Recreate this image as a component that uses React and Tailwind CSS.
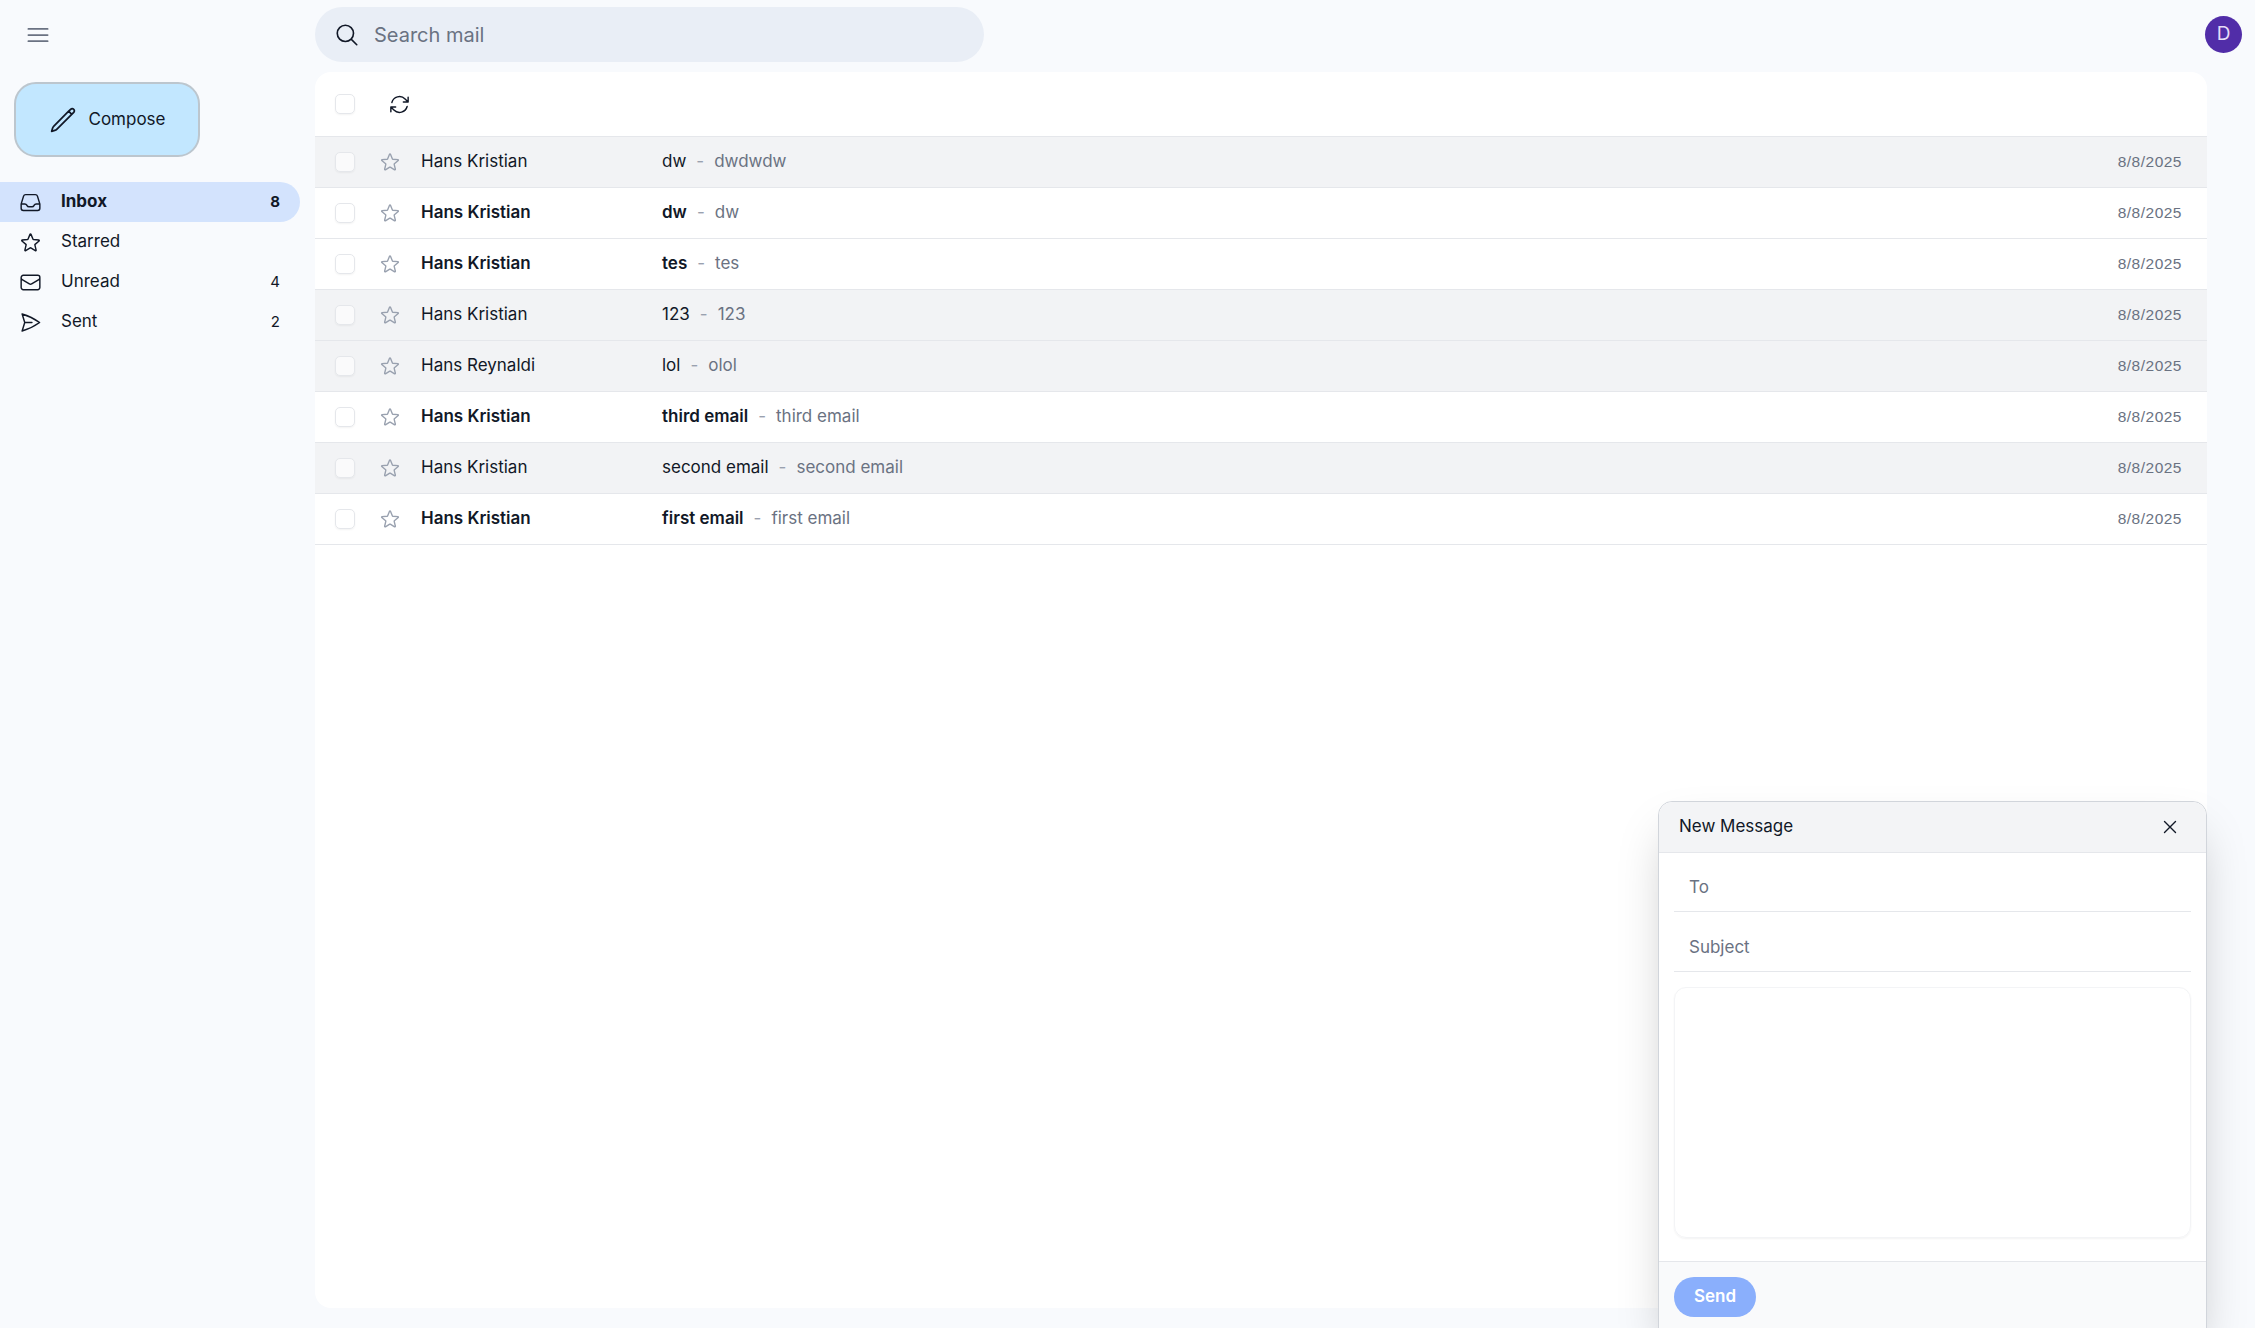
import React from "react";
import {
  HiOutlineBars3, HiOutlineMagnifyingGlass, HiOutlinePencil, HiOutlineArrowPath, HiOutlineInbox,
  HiOutlineStar, HiOutlineEnvelope, HiOutlinePaperAirplane, HiOutlineXMark,
} from "react-icons/hi2";

const NAV = [
  { icon: HiOutlineInbox, label: "Inbox", count: "8", active: true },
  { icon: HiOutlineStar, label: "Starred", count: "" },
  { icon: HiOutlineEnvelope, label: "Unread", count: "4" },
  { icon: HiOutlinePaperAirplane, label: "Sent", count: "2" },
];

const MAILS = [
  { from: "Hans Kristian", subject: "dw", body: "dwdwdw", read: true },
  { from: "Hans Kristian", subject: "dw", body: "dw" },
  { from: "Hans Kristian", subject: "tes", body: "tes" },
  { from: "Hans Kristian", subject: "123", body: "123", read: true },
  { from: "Hans Reynaldi", subject: "lol", body: "olol", read: true },
  { from: "Hans Kristian", subject: "third email", body: "third email" },
  { from: "Hans Kristian", subject: "second email", body: "second email", read: true },
  { from: "Hans Kristian", subject: "first email", body: "first email" },
];

function Check() {
  return <span className="block w-5 h-5 shrink-0 rounded-[5px] border border-gray-200 bg-white/60 shadow-xs" />;
}

function Row({ mail }) {
  return (
    <div className={`flex items-center h-[51px] border-b border-[#e5e7eb] pl-5 pr-[25px] text-[17px] ${mail.read ? "bg-[#f2f3f5]" : "bg-white"}`}>
      <Check />
      <HiOutlineStar className="ml-[24px] w-[22px] h-[22px] shrink-0 text-gray-400" />
      <span className={`ml-[20px] w-[241px] shrink-0 text-[#111827] ${mail.read ? "" : "font-semibold"}`}>{mail.from}</span>
      <span className={`text-[#111827] ${mail.read ? "" : "font-semibold"}`}>{mail.subject}</span>
      <span className="mx-[10px] text-gray-400">-</span>
      <span className="text-gray-500">{mail.body}</span>
      <span className="ml-auto text-[15.5px] tracking-[0.5px] text-gray-500 font-['Liberation_Sans',sans-serif]">8/8/2025</span>
    </div>
  );
}

export default function App() {
  return (
    <div className="relative flex h-[1328px] w-full overflow-hidden bg-[#f8fafd] font-['Inter',sans-serif] text-[#111827]">
      <aside className="w-[315px] shrink-0 flex flex-col">
        <div className="h-[70px] flex items-center pl-[24px]">
          <HiOutlineBars3 className="w-[28px] h-[28px] text-gray-500" />
        </div>
        <div className="pl-[14px] pt-[12px]">
          <button className="w-[186px] h-[75px] flex items-center justify-center gap-[12px] rounded-[22px] border-2 border-[#bcc6ce] bg-[#c2e7ff] text-[17px] text-[#111827]">
            <HiOutlinePencil className="w-[28px] h-[28px]" />
            Compose
          </button>
        </div>
        <nav className="mt-[25px] flex flex-col">
          {NAV.map((n) => (
            <div key={n.label} className={`flex items-center h-[40px] w-[300px] pl-[19px] pr-[20px] rounded-r-full text-[17px] ${n.active ? "bg-[#d3e3fd] font-bold" : ""}`}>
              <n.icon className="w-[23px] h-[23px] shrink-0" />
              <span className="ml-[19px]">{n.label}</span>
              <span className="ml-auto text-[15px]">{n.count}</span>
            </div>
          ))}
        </nav>
      </aside>
      <main className="flex-1 min-w-0 flex flex-col">
        <div className="h-[72px] flex items-start pt-[7px] pr-[13px] justify-between">
          <div className="w-[669px] h-[55px] rounded-full bg-[#e9eef6] flex items-center pl-[19px]">
            <HiOutlineMagnifyingGlass className="w-[26px] h-[26px]" />
            <span className="ml-[14px] text-[20px] text-gray-500">Search mail</span>
          </div>
          <span className="mt-[9px] w-[37px] h-[37px] rounded-full bg-[#512da8] text-[#e6dcf7] text-[19px] flex items-center justify-center">D</span>
        </div>
        <section className="w-[1892px] h-[1236px] rounded-t-[16px] rounded-b-[16px] bg-white overflow-hidden">
          <div className="h-[65px] flex items-center pl-5 border-b border-[#e5e7eb]">
            <Check />
            <HiOutlineArrowPath className="ml-[33px] w-[23px] h-[23px]" />
          </div>
          {MAILS.map((m, i) => <Row key={i} mail={m} />)}
        </section>
      </main>
      <div className="absolute right-[48px] top-[801px] w-[549px] h-[533px] flex flex-col rounded-t-[14px] border border-[#d1d5db] bg-white shadow-2xl">
        <div className="h-[51px] shrink-0 flex items-center justify-between pl-5 pr-[25px] bg-[#f3f4f6] border-b border-[#e5e7eb] rounded-t-[14px] text-[17px]">
          <span>New Message</span>
          <HiOutlineXMark className="w-[22px] h-[22px]" />
        </div>
        <div className="flex-1 flex flex-col px-[15px]">
          <div className="h-[59px] shrink-0 flex items-center pl-[15px] pt-[17px] pb-[6px] border-b border-[#e5e7eb] text-[17px] text-gray-500">To</div>
          <div className="h-[60px] shrink-0 flex items-center pl-[15px] pt-[18px] pb-[6px] border-b border-[#e5e7eb] text-[17px] text-gray-500">Subject</div>
          <div className="mt-[15px] h-[251px] rounded-[12px] border border-gray-100 shadow-xs" />
        </div>
        <div className="h-[72px] shrink-0 px-[15px] pt-[15px] bg-[#f9fafb] border-t border-[#e5e7eb]">
          <button className="w-[82px] h-[40px] rounded-full bg-[#8aaffc] text-white font-semibold text-[17px]">Send</button>
        </div>
      </div>
    </div>
  );
}
